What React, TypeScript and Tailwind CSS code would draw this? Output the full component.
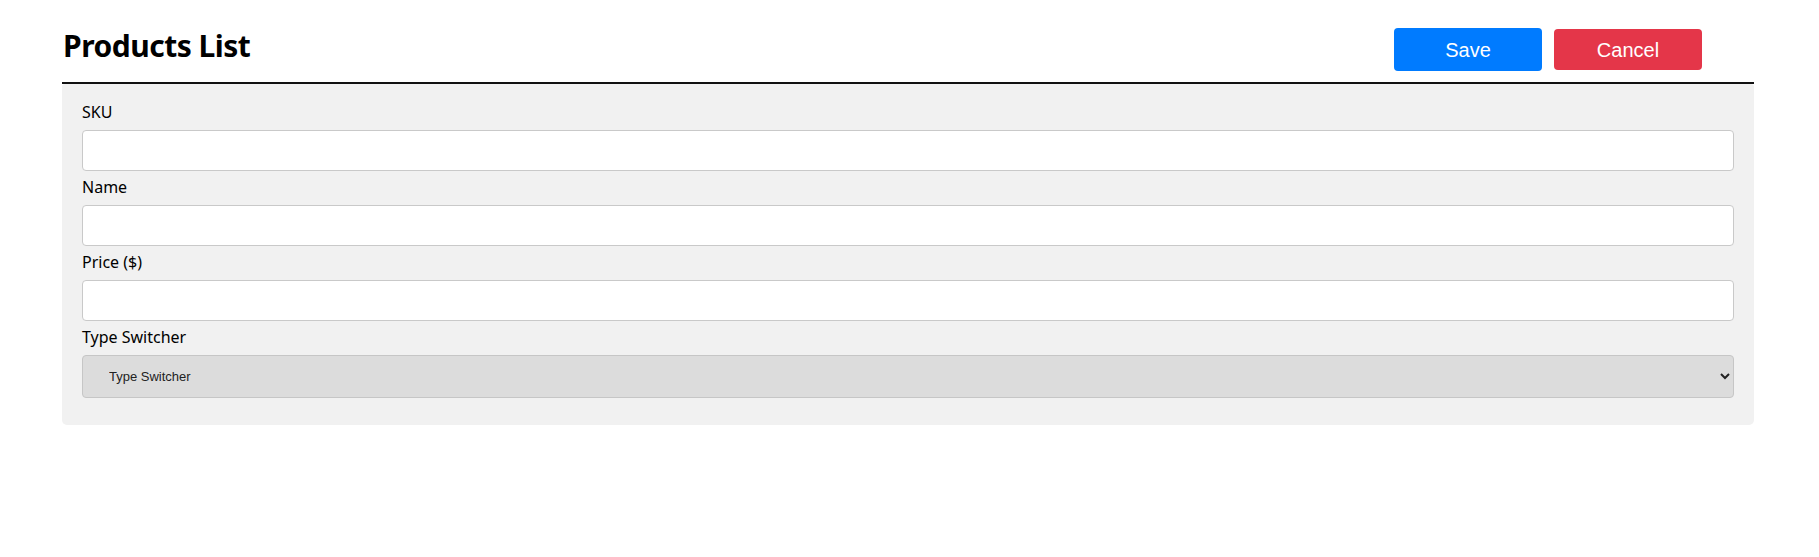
import { useState } from 'react';

const FIELDS = [
  { id: 'sku', label: 'SKU' },
  { id: 'name', label: 'Name' },
  { id: 'price', label: 'Price ($)' },
];

export default function App() {
  const [values, setValues] = useState<Record<string, string>>({ sku: '', name: '', price: '' });
  const [type, setType] = useState('');

  return (
    <div className="min-h-screen bg-white font-['Noto_Sans',sans-serif] text-black">
      <div className="ml-[62px] w-[1692px]">
        {/* Cabecera */}
        <header className="flex h-[84px] items-start justify-between border-b-2 border-[#111] pl-px">
          <h1 className="mt-[27px] text-[30px] font-bold leading-[37px] tracking-[-0.5px]">Products List</h1>
          <div className="mr-[52px] mt-[28px] flex h-[43px] items-center gap-3 font-['Liberation_Sans',Arial,sans-serif] text-[20px]">
            <button className="h-[43px] w-[148px] rounded-[4px] bg-[#007bff] text-white">Save</button>
            <button className="h-[41px] w-[148px] rounded-[4px] bg-[#e43649] text-white">Cancel</button>
          </div>
        </header>

        {/* Formulario */}
        <form className="rounded-b-[5px] rounded-t-[3px] bg-[#f1f1f1] px-5 pb-[27px] pt-4">
          {FIELDS.map((f) => (
            <div key={f.id}>
              <label htmlFor={f.id} className="mb-[6px] block pt-px text-[16px] leading-[23px]">
                {f.label}
              </label>
              <input
                id={f.id}
                value={values[f.id]}
                onChange={(e) => setValues({ ...values, [f.id]: e.target.value })}
                className="mb-[4px] block h-[41px] w-full rounded-[4px] border border-[#c9c9c9] bg-white px-3 outline-none"
              />
            </div>
          ))}
          <label htmlFor="productType" className="mb-[6px] block pt-px text-[16px] leading-[23px]">
            Type Switcher
          </label>
          <select
            id="productType"
            value={type}
            onChange={(e) => setType(e.target.value)}
            className="block h-[43px] w-full rounded-[4px] border border-[#c6c6c6] bg-[#dcdcdc] pl-[22px] pr-2 font-['Liberation_Sans',Arial,sans-serif] text-[13px] text-[#222] outline-none"
          >
            <option value="">Type Switcher</option>
            <option value="dvd">DVD</option>
            <option value="book">Book</option>
            <option value="furniture">Furniture</option>
          </select>
        </form>
      </div>
    </div>
  );
}
